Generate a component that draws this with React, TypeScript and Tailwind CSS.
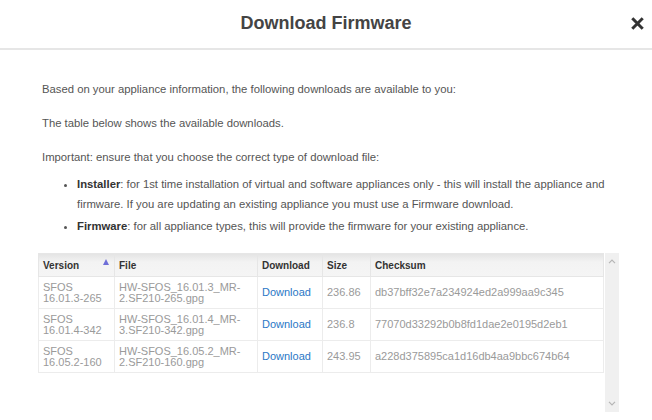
import React from "react";

const rows = [
  { v1: "SFOS", v2: "16.01.3-265", f1: "HW-SFOS_16.01.3_MR-", f2: "2.SF210-265.gpg", size: "236.86", sum: "db37bff32e7a234924ed2a999aa9c345" },
  { v1: "SFOS", v2: "16.01.4-342", f1: "HW-SFOS_16.01.4_MR-", f2: "3.SF210-342.gpg", size: "236.8", sum: "77070d33292b0b8fd1dae2e0195d2eb1" },
  { v1: "SFOS", v2: "16.05.2-160", f1: "HW-SFOS_16.05.2_MR-", f2: "2.SF210-160.gpg", size: "243.95", sum: "a228d375895ca1d16db4aa9bbc674b64" },
];

export default function App() {
  return (
    <div className="w-[652px] h-[420px] bg-white overflow-hidden font-['Liberation_Sans',Arial,sans-serif] relative">
      <div className="h-[50px] border-b-2 border-[#e6e6e6] flex items-center justify-center relative">
        <h1 className="text-[18px] font-bold text-[#444] leading-none -mt-[3px]">Download Firmware</h1>
        <button className="absolute right-[8px] top-[16px] w-[14px] h-[14px] flex items-center justify-center">
          <svg viewBox="0 0 14 14" width="13" height="13">
            <path d="M2.5 2.5 L11.5 11.5 M11.5 2.5 L2.5 11.5" stroke="#333" strokeWidth="3.2" strokeLinecap="square" />
          </svg>
        </button>
      </div>
      <div className="pl-[42px] pr-[30px] pt-[29px] text-[11.3px] leading-[20px] text-[#555]">
        <p className="mb-[14px]">Based on your appliance information, the following downloads are available to you:</p>
        <p className="mb-[14px]">The table below shows the available downloads.</p>
        <p className="mb-[7px]">Important: ensure that you choose the correct type of download file:</p>
        <ul className="list-disc pl-[35px]">
          <li className="mb-[2px]">
            <b className="text-[#333]">Installer</b>: for 1st time installation of virtual and software appliances only - this will install the appliance and firmware. If you are updating an existing appliance you must use a Firmware download.
          </li>
          <li>
            <b className="text-[#333]">Firmware</b>: for all appliance types, this will provide the firmware for your existing appliance.
          </li>
        </ul>
        <div className="flex gap-[2px] -ml-[4px] mt-[17px] h-[159px]">
          <div className="w-[565px] self-start">
            <table className="w-[565px] table-fixed border-collapse text-[11px] leading-[11px]">
              <colgroup>
                <col className="w-[76px]" />
                <col className="w-[143px]" />
                <col className="w-[65px]" />
                <col className="w-[48px]" />
                <col className="w-[233px]" />
              </colgroup>
              <thead>
                <tr className="h-[23px] bg-[linear-gradient(#e4e4e4,#f3f3f3_35%,#f5f5f5)] text-[10px] font-bold text-[#333] text-left">
                  <th className="px-[4px] border border-[#e6e6e6] relative">
                    Version
                    <span className="absolute right-[5px] top-[5px] w-0 h-0 border-l-[3.5px] border-r-[3.5px] border-b-[6px] border-l-transparent border-r-transparent border-b-[#6f6fd8]" />
                  </th>
                  <th className="px-[4px] border border-[#e6e6e6]">File</th>
                  <th className="px-[4px] border border-[#e6e6e6]">Download</th>
                  <th className="px-[4px] border border-[#e6e6e6]">Size</th>
                  <th className="px-[4px] border border-[#e6e6e6]">Checksum</th>
                </tr>
              </thead>
              <tbody className="text-[#9a9a9a]">
                {rows.map((r, i) => (
                  <tr key={i} className="h-[32px]">
                    <td className="px-[4px] border border-[#ececec] align-middle">
                      <span className="block">{r.v1}</span>
                      <span className="block">{r.v2}</span>
                    </td>
                    <td className="px-[4px] border border-[#ececec] align-middle">
                      <span className="block whitespace-nowrap">{r.f1}</span>
                      <span className="block whitespace-nowrap">{r.f2}</span>
                    </td>
                    <td className="px-[4px] border border-[#ececec] align-middle">
                      <a className="text-[#2a78c6]">Download</a>
                    </td>
                    <td className="px-[4px] border border-[#ececec] align-middle">{r.size}</td>
                    <td className="px-[4px] border border-[#ececec] align-middle whitespace-nowrap">{r.sum}</td>
                  </tr>
                ))}
              </tbody>
            </table>
          </div>
          <div className="w-[14px] h-[159px] bg-[#f0f0f0] flex flex-col items-center justify-between py-[6px]">
            <svg viewBox="0 0 8 5" width="8" height="5">
              <path d="M1 4.2 L4 1.2 L7 4.2" stroke="#b5b5b5" strokeWidth="1.2" fill="none" />
            </svg>
            <svg viewBox="0 0 8 5" width="8" height="5">
              <path d="M1 0.8 L4 3.8 L7 0.8" stroke="#b5b5b5" strokeWidth="1.2" fill="none" />
            </svg>
          </div>
        </div>
      </div>
    </div>
  );
}
